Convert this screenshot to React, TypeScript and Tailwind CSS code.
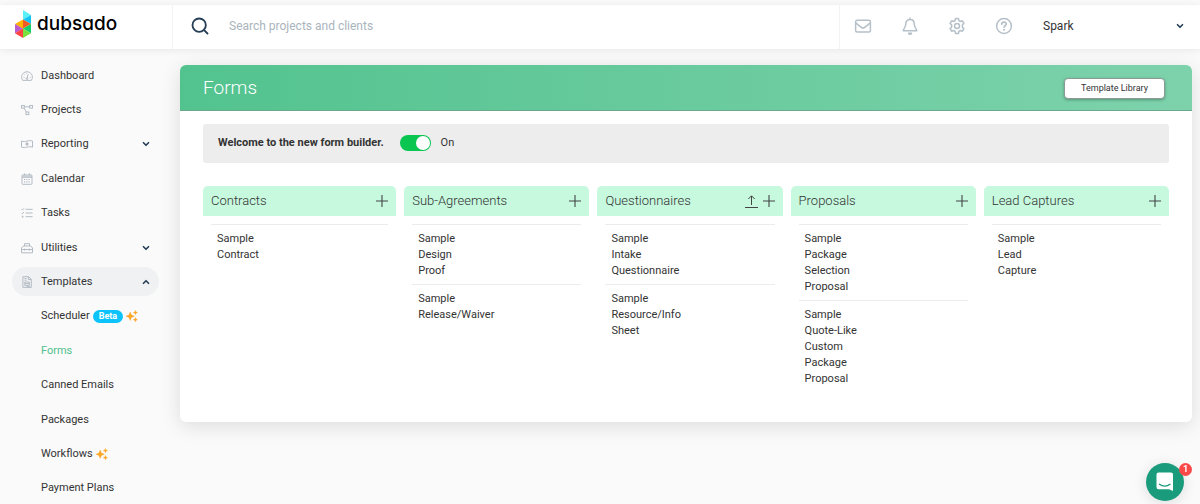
import { useState } from "react";
import { ChevronDown, ChevronUp, Search } from "lucide-react";

type IconName = "dashboard" | "projects" | "reporting" | "calendar" | "tasks" | "utilities" | "templates";

type NavEntry = {
  label: string;
  icon?: IconName;
  chevron?: "up" | "down";
  beta?: boolean;
  sparkle?: boolean;
  active?: boolean;
};

const nav: NavEntry[] = [
  { label: "Dashboard", icon: "dashboard" },
  { label: "Projects", icon: "projects" },
  { label: "Reporting", icon: "reporting", chevron: "down" },
  { label: "Calendar", icon: "calendar" },
  { label: "Tasks", icon: "tasks" },
  { label: "Utilities", icon: "utilities", chevron: "down" },
  { label: "Templates", icon: "templates", chevron: "up" },
  { label: "Scheduler", beta: true, sparkle: true },
  { label: "Forms", active: true },
  { label: "Canned Emails" },
  { label: "Packages" },
  { label: "Workflows", sparkle: true },
  { label: "Payment Plans" },
];

type FormGroup = { title: string; upload?: boolean; items: string[] };

const groups: FormGroup[] = [
  { title: "Contracts", items: ["Sample Contract"] },
  { title: "Sub-Agreements", items: ["Sample Design Proof", "Sample Release/Waiver"] },
  { title: "Questionnaires", upload: true, items: ["Sample Intake Questionnaire", "Sample Resource/Info Sheet"] },
  { title: "Proposals", items: ["Sample Package Selection Proposal", "Sample Quote-Like Custom Package Proposal"] },
  { title: "Lead Captures", items: ["Sample Lead Capture"] },
];

function NavIcon({ name }: { name: IconName }) {
  return (
    <svg viewBox="0 0 12 12" className="size-3 shrink-0" fill="none" stroke="#b3bcc5" strokeWidth="1" aria-hidden="true">
      {name === "dashboard" && (
        <>
          <path d="M1.7 10.4A5.4 5.4 0 1 1 10.3 10.4Z" strokeLinejoin="round" />
          <path d="M6.1 8.2 7.2 4.2M2.6 7.4h.9M8.9 7.4h.8M3.5 4.6l.6.5M5.7 3.3v.8" />
          <circle cx="6" cy="8.6" r=".9" />
        </>
      )}
      {name === "projects" && (
        <>
          <rect x=".5" y="1.500" width="2.800" height="2.600" />
          <rect x="8.700" y="1.500" width="2.800" height="2.600" />
          <rect x="5" y="8" width="2.800" height="2.600" />
          <path d="M3.300 2.800h5.400M3 4.100l2.400 3.900" />
        </>
      )}
      {name === "reporting" && (
        <>
          <path d="M.5 3c2 .9 3.500.6 5.500.1s3.700-.7 5.500-.1v6.200c-2-.8-3.500-.6-5.500-.1s-3.700.7-5.500.1Z" />
          <ellipse cx="6" cy="6" rx="1" ry="1.300" fill="#b3bcc5" />
        </>
      )}
      {name === "calendar" && (
        <>
          <rect x="1" y="1.900" width="10" height="9.400" rx=".8" />
          <path d="M1 3.100h10M1 4.300h10M3.500.3v2M8.500.3v2" />
          <path d="M3 6.500h6.500M3 8.900h6.500" strokeWidth="1.200" strokeDasharray="1.200 1" />
        </>
      )}
      {name === "tasks" && (
        <>
          <path d="M4.600 2.300h7M4.600 6h7M4.600 9.700h7" />
          <path d="m.5 2.300 .8.8 1.700-1.800M.5 6l.8.8 1.700-1.800" />
          <circle cx="1.600" cy="9.700" r=".6" />
        </>
      )}
      {name === "utilities" && (
        <path d="M.5 10.800V6l1.700-2h7.600l1.700 2v4.800ZM3.500 4V1.700h5V4M.5 7.500h11M3.700 6.600v2M8.300 6.600v2" strokeLinejoin="round" />
      )}
      {name === "templates" && (
        <>
          <path d="M1.900.7h5.700l2.700 2.600v8.100H1.900ZM7.400.7v2.800h2.800M3.500 2.500h2M3.500 4.200h2" />
          <path d="M3.800 6h4.500v3.400H3.800ZM3.800 7.600h4.500M5.800 10.400h3" />
        </>
      )}
    </svg>
  );
}

function Sparkle() {
  return (
    <svg viewBox="0 0 12 12" className="size-3 shrink-0" fill="#fba524" stroke="#fba524" strokeWidth="0.4" aria-hidden="true">
      <path d="M4.200 2 5.400 5 8.400 6.200 5.400 7.400 4.200 10.400 3 7.400 0 6.200 3 5Z" />
      <path d="m9.400.5.6 1.500 1.500.6-1.500.6-.6 1.500-.6-1.500-1.500-.6L8.800 2Z" />
      <path d="m9.400 7.600.6 1.500 1.500.6-1.500.6-.6 1.500-.6-1.500-1.500-.6 1.500-.6Z" />
    </svg>
  );
}

function Logo() {
  return (
    <a href="#" className="flex items-center gap-1.5 text-black">
      <svg viewBox="0 0 16 28" className="h-7 w-4" aria-hidden="true">
        <path d="M8 0v9.500L16 5Z" fill="#5cf0f5" />
        <path d="M16 5v9L8 9.500Z" fill="#12c3f5" />
        <path d="M8 9.500V19L0 14Z" fill="#ffb400" />
        <path d="M8 9.500 16 14l-8 4.600Z" fill="#f15a24" />
        <path d="M0 14l8 4.700-8 4.500Z" fill="#bb5bd0" />
        <path d="M16 14v9.200l-8-4.600Z" fill="#12ce6a" />
        <path d="M0 23.200l8-4.600V28Z" fill="#ff4343" />
        <path d="M16 23.200 8 28v-9.400Z" fill="#79df3c" />
      </svg>
      <span className="font-['Inter',sans-serif] text-[19px] leading-6 font-medium [font-feature-settings:'cv11']">dubsado</span>
    </a>
  );
}

function TopAction({ label, children }: { label: string; children: React.ReactNode }) {
  return (
    <button type="button" aria-label={label} className="flex size-[18px] items-center justify-center">
      <svg viewBox="0 0 18 18" className="size-[18px]" fill="none" stroke="#b6c0c9" strokeWidth="1.500" strokeLinecap="round" strokeLinejoin="round" aria-hidden="true">
        {children}
      </svg>
    </button>
  );
}

function Header() {
  return (
    <header className="relative z-10 flex h-11 items-stretch bg-white shadow-[0_1px_8px_rgba(0,0,0,0.08)]">
      <div className="flex w-[173px] shrink-0 items-center border-r border-[#f3f3f3] pb-1.5 pl-[15px]">
        <Logo />
      </div>
      <label className="flex min-w-0 flex-1 items-center gap-[19px] pb-[3px] pl-[17px]">
        <Search className="size-5 shrink-0 text-[#263f57]" strokeWidth={2.200} />
        <input
          type="search"
          aria-label="Search projects and clients"
          placeholder="Search projects and clients"
          className="min-w-0 flex-1 bg-transparent text-[12px] text-[#333] outline-none placeholder:text-[#a9b4bd]"
        />
      </label>
      <div className="flex w-[361px] shrink-0 items-center border-l border-[#f3f3f3] pb-[3px] pl-[14px]">
        <div className="flex gap-[29px]">
          <TopAction label="Messages">
            <rect x="1.600" y="3.300" width="14.800" height="11.600" rx="1.500" />
            <path d="m2 6.200 5.300 4.200c1 .8 2.400.8 3.400 0L16 6.200" />
          </TopAction>
          <TopAction label="Notifications">
            <path d="M9 1v1.500M9 2.500c-2.600 0-4.200 1.900-4.200 4.300 0 4-2.600 5-2.600 6.900h13.600c0-1.900-2.600-2.900-2.600-6.900 0-2.400-1.600-4.300-4.200-4.300Z" />
            <path d="M7.500 16.200a1.600 1.600 0 0 0 3 0Z" fill="#b6c0c9" />
          </TopAction>
          <TopAction label="Settings">
            <path d="M7.500 1.600h3l.4 2 1.500.9 2-.7 1.500 2.600-1.500 1.400v2.400l1.500 1.400-1.500 2.600-2-.7-1.500.9-.4 2h-3l-.4-2-1.500-.9-2 .7-1.500-2.600 1.500-1.400V7.800L2.100 6.400l1.500-2.600 2 .7 1.500-.9Z" />
            <circle cx="9" cy="9" r="2.500" />
          </TopAction>
          <TopAction label="Help">
            <circle cx="9" cy="9" r="7.400" />
            <path d="M6.700 7.100c.2-2.800 4.700-2.600 4.600 0 0 1.600-2.200 1.600-2.200 3" strokeWidth="1.700" />
            <path d="M9 12.700v.1" strokeWidth="2" />
          </TopAction>
        </div>
        <button type="button" className="ml-[30px] flex flex-1 items-center justify-between pr-[15px] text-[12px] text-[#333]">
          Spark
          <ChevronDown className="size-[10px] text-[#263f57]" strokeWidth={4} />
        </button>
      </div>
    </header>
  );
}

function Sidebar() {
  return (
    <nav aria-label="Main" className="flex w-[180px] shrink-0 flex-col pt-3 pb-px pl-3">
      <ul className="flex max-h-[442px] flex-1 flex-col justify-between">
        {nav.map((entry) => {
          const Chevron = entry.chevron === "up" ? ChevronUp : ChevronDown;
          return (
            <li key={entry.label}>
              <a
                href="#"
                className={
                  "flex h-[29px] w-[147px] items-center rounded-full pr-2 text-[11px] leading-[18px] " +
                  (entry.icon ? "gap-2 pl-[9px] " : "gap-[3px] pl-[29px] ") +
                  (entry.chevron === "up" ? "bg-[#f0f1f3] " : "") +
                  (entry.active ? "text-[#4fc08d]" : "text-[#333]")
                }
              >
                {entry.icon && <NavIcon name={entry.icon} />}
                {entry.label}
                {entry.beta && (
                  <span className="rounded-full bg-[#0cc3fb] px-1.5 text-[9px] leading-[13px] font-bold text-white">Beta</span>
                )}
                {entry.sparkle && <Sparkle />}
                {entry.chevron && <Chevron className="ml-auto size-[10px] text-[#263f57]" strokeWidth={4} />}
              </a>
            </li>
          );
        })}
      </ul>
    </nav>
  );
}

function Banner() {
  const [enabled, setEnabled] = useState(true);
  return (
    <div className="flex h-[39px] items-center rounded-[3px] bg-[#ededed] px-[15px] pb-0.5 text-[11px] leading-[18px]">
      <span className="font-bold text-[#333]">Welcome to the new form builder.</span>
      <label className="ml-4 flex items-center gap-2.5 text-[#333]">
        <input
          type="checkbox"
          role="switch"
          checked={enabled}
          onChange={(event) => setEnabled(event.target.checked)}
          className="flex h-4 w-[31px] cursor-pointer appearance-none items-center rounded-full bg-[#999] p-px before:size-[14px] before:rounded-full before:bg-white checked:justify-end checked:bg-[#0bc551]"
        />
        {enabled ? "On" : "Off"}
      </label>
    </div>
  );
}

function Group({ group }: { group: FormGroup }) {
  return (
    <section className="not-first:pl-2">
      <header className="flex h-[30px] items-center gap-[5px] rounded-t-[5px] bg-[#c6f9de] px-2">
        <h2 className="flex-1 text-[13px] leading-5 font-light text-[#333]">{group.title}</h2>
        {group.upload && (
          <button type="button" aria-label="Upload">
            <svg viewBox="0 0 13 13" className="size-[13px]" fill="none" stroke="#444" aria-hidden="true">
              <path d="M0 12.500h13M6.500 10V1M3.300 4l3.200-3.200L9.700 4" />
            </svg>
          </button>
        )}
        <button type="button" aria-label={"Add to " + group.title}>
          <svg viewBox="0 0 12 12" className="size-3" stroke="#444" strokeWidth="1.100" aria-hidden="true">
            <path d="M6 0v12M0 6h12" />
          </svg>
        </button>
      </header>
      <ul className="px-2 pt-2">
        {group.items.map((item) => (
          <li key={item} className="border-t border-[#ececec] px-1.5 pt-1.5 pb-[5px]">
            <a href="#" className="block text-[11px] leading-4 whitespace-pre-line text-[#333]">
              {item.replaceAll(" ", "\n")}
            </a>
          </li>
        ))}
      </ul>
    </section>
  );
}

export default function App() {
  return (
    <div className="relative flex min-h-screen flex-col bg-[#fafafa] pt-[5px] font-['Roboto',sans-serif]">
      <Header />
      <div className="flex flex-1">
        <Sidebar />
        <main className="min-w-0 flex-1 pt-4 pr-2">
          <div className="rounded-[6px] bg-white shadow-[0_4px_20px_rgba(0,0,0,0.12)]">
            <div className="flex h-[46px] items-center justify-between rounded-t-[6px] border-b border-[#6aa98c] bg-linear-to-r from-[#52c38f] to-[#7dd2ac] pt-0.5 pr-[27px] pl-[23px]">
              <h1 className="text-[19px] font-light text-white">Forms</h1>
              <button type="button" className="h-[21px] w-[101px] rounded-[4px] border border-[#8a9c93] bg-white text-[9px] text-[#333] shadow-[0_1px_3px_rgba(0,0,0,0.3)]">
                Template Library
              </button>
            </div>
            <div className="px-[23px] pt-[13px] pb-[30px]">
              <Banner />
              <div className="mt-[23px] grid grid-cols-5">
                {groups.map((group) => (
                  <Group key={group.title} group={group} />
                ))}
              </div>
            </div>
          </div>
        </main>
      </div>
      <button
        type="button"
        aria-label="Open chat, 1 unread message"
        className="fixed right-4 bottom-[3px] z-20 flex size-[38px] items-center justify-center rounded-full bg-[#1a9b7b] shadow-[0_2px_14px_rgba(0,0,0,0.12)]"
      >
        <svg viewBox="0 0 18 20" className="h-5 w-[18px]" aria-hidden="true">
          <path d="M2.500.5h12.500a2 2 0 0 1 2 2V19l-4-1.700H2.500a2 2 0 0 1-2-2V2.500a2 2 0 0 1 2-2Z" fill="#fff" />
          <path d="M3.500 12.200c3 2.600 7.500 2.600 10.500 0" fill="none" stroke="#1a9b7b" strokeWidth="1.200" strokeLinecap="round" />
        </svg>
        <span className="absolute top-0 -right-2 flex size-[13px] items-center justify-center rounded-full bg-[#fb4848] text-[9px] font-bold text-white">1</span>
      </button>
    </div>
  );
}
